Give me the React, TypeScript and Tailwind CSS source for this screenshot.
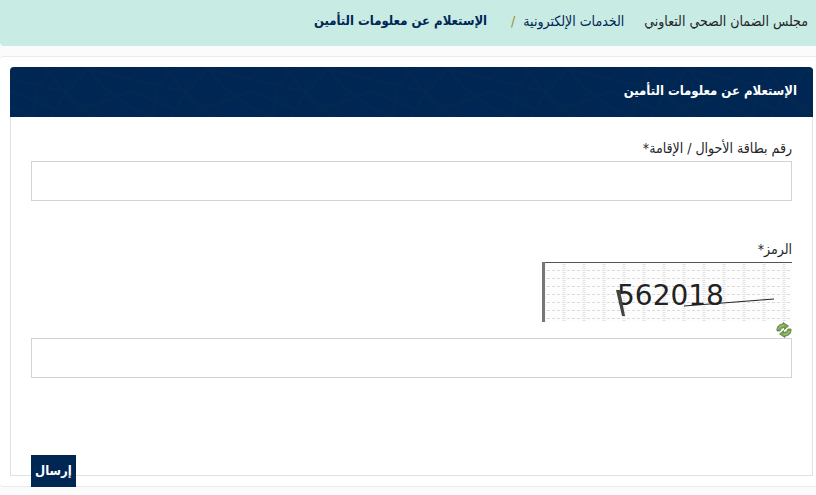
import React, { useState } from "react";

const HeaderPattern: React.FC = () => (
  <svg className="absolute inset-0 h-full w-full" aria-hidden="true">
    <defs>
      <pattern id="lattice" width="120" height="50" patternUnits="userSpaceOnUse">
        <path
          d="M0 12L28 18L48 0M28 18L22 50M28 18L56 25L78 2M56 25L40 50M56 25L84 50M78 2L120 12M84 50L98 24L120 40M98 24L78 2M0 40L22 50M0 12L12 0M34 0L70 44L120 24M0 24L60 48"
          fill="none"
          stroke="#042850"
          strokeWidth="2"
        />
      </pattern>
    </defs>
    <rect width="100%" height="100%" fill="url(#lattice)" />
  </svg>
);

const Captcha: React.FC = () => (
  <svg width="250" height="60" viewBox="0 0 250 60" role="img" aria-label="الرمز">
    <defs>
      <pattern id="captcha-grid" width="20" height="8" patternUnits="userSpaceOnUse">
        <path d="M0 0.5H20" stroke="#dadada" strokeDasharray="3 2" />
        <path d="M2 0V8" stroke="#e2e2e2" strokeWidth="3" strokeDasharray="1 1" />
      </pattern>
    </defs>
    <rect width="250" height="60" fill="#fdfdfd" />
    <rect width="250" height="60" fill="url(#captcha-grid)" />
    <path d="M0 0.5H250" stroke="#555" />
    <path d="M1.5 0V60" stroke="#777" strokeWidth="3" />
    <text
      x="75"
      y="43"
      fontSize="28"
      fill="#222"
      direction="ltr"
      fontFamily="DejaVu Sans, sans-serif"
    >
      562018
    </text>
    <path d="M74 28H78L83 54H80Z" fill="#444" />
    <path d="M142 44L232 37" stroke="#222" />
  </svg>
);

const RefreshIcon: React.FC = () => (
  <svg width="16" height="16" viewBox="0 0 16 16" aria-hidden="true">
    <g fill="#7aa653" stroke="#4a7030" strokeWidth="0.7" strokeLinejoin="round">
      <path d="M1 9C0.500 5 3 2 7 2V0.500L12.500 4L8.500 7.500V5.500C6.500 5.500 5 6.500 4 9Z" />
      <path d="M15 7C15.500 11 13 14 9 14V15.500L3.500 12L7.500 8.500V10.500C9.500 10.500 11 9.500 12 7Z" />
    </g>
    <path
      d="M2.500 7C3 4.800 5 3.600 8.500 3.500M13.500 9C13 11.200 11 12.400 7.500 12.500"
      fill="none"
      stroke="#a9cb85"
    />
  </svg>
);

const App: React.FC = () => {
  const [idNumber, setIdNumber] = useState("");
  const [code, setCode] = useState("");

  return (
    <div
      dir="rtl"
      className="min-h-screen bg-[#fbfbfb] text-sm leading-5 text-[#212529] font-['DejaVu_Sans_Condensed','DejaVu_Sans',sans-serif]"
    >
      {/* Breadcrumb */}
      <nav className="flex h-[46px] items-center rounded-bl bg-[#c8ebe4] px-2 pb-1 text-[#002654]">
        <a href="#" className="text-[#212529]">
          مجلس الضمان الصحي التعاوني
        </a>
        <a href="#" className="ms-5">
          الخدمات الإلكترونية
        </a>
        <span className="ms-2 text-[#a08a3c]">/</span>
        <span className="ms-6 text-[13px] font-bold">الإستعلام عن معلومات التأمين</span>
      </nav>

      <main className="mt-[10px] rounded-l border-y border-[#ebebeb] bg-white pt-[10px] pr-[3px] pb-[10px] pl-[10px]">
        <section className="rounded-t border border-t-0 border-[#dee2e6]">
          <header className="relative -mx-px h-[50px] overflow-hidden rounded-t bg-[#002654]">
            <HeaderPattern />
            <h1 className="relative px-4 pt-3 text-[13px] leading-6 font-bold text-white">
              الإستعلام عن معلومات التأمين
            </h1>
          </header>

          <form className="flex flex-col px-5 pt-[21px]" onSubmit={(e) => e.preventDefault()}>
            <label htmlFor="id-number" className="pb-[3px]">
              رقم بطاقة الأحوال / الإقامة*
            </label>
            <input
              type="text"
              id="id-number"
              value={idNumber}
              onChange={(e) => setIdNumber(e.target.value)}
              className="h-10 w-full border border-[#ced4da] px-3"
            />

            <label htmlFor="code" className="pt-[38px] pb-[3px]">
              الرمز*
            </label>
            <Captcha />
            <button type="button" aria-label="تحديث الرمز" className="h-4 w-4">
              <RefreshIcon />
            </button>
            <input
              type="text"
              id="code"
              value={code}
              onChange={(e) => setCode(e.target.value)}
              className="h-10 w-full border border-[#ced4da] px-3"
            />

            <button
              type="submit"
              className="mt-[77px] -mb-3 h-8 self-end bg-[#002654] px-1 text-[13px] font-bold text-white"
            >
              إرسال
            </button>
          </form>
        </section>
      </main>
    </div>
  );
};

export default App;
